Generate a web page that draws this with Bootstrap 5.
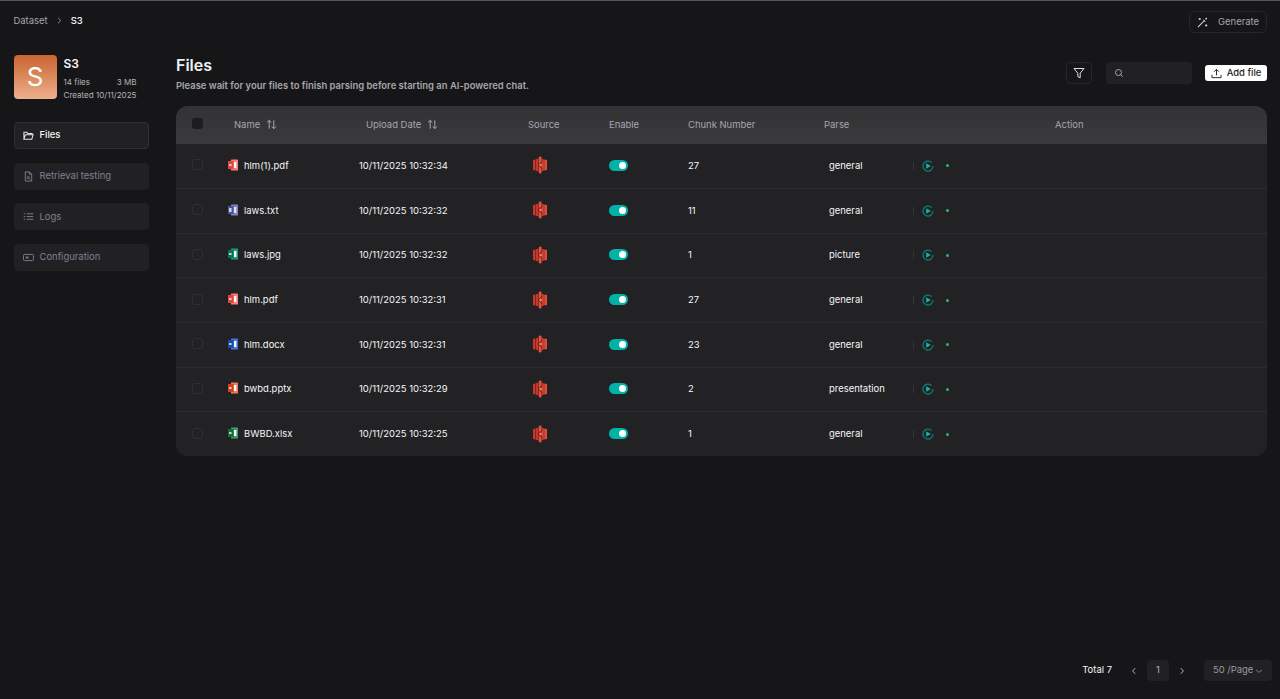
<!DOCTYPE html>
<html lang="en">
<head>
<meta charset="utf-8">
<title>Files</title>
<link href="https://cdn.jsdelivr.net/npm/bootstrap@5.3.0/dist/css/bootstrap.min.css" rel="stylesheet">
<style>
html,body{height:100%}
body{background:#161618;color:#f6f6f7;font-family:Inter,"Liberation Sans",sans-serif;font-size:9.45px;overflow:hidden}
.shell{height:699px;border-top:1px solid #55565a}
.crumbs{height:41px;padding:0 13px 0 13.5px}
.crumb-line{margin-top:-1px}
.crumb-a{color:#a6a7ad}
.crumb-b{color:#f6f6f7;font-weight:500}
.gen-btn{height:22px;width:78px;border:1px solid #26272a;border-radius:5px;color:#a6a7ad;font-size:9.45px;padding:0 7px 0 7px;background:transparent;margin-top:1px}
.body-row{height:656px}
.side{width:176px;padding:13px 27.5px 0 13.5px}
.ds-head{height:44px}
.ds-logo{width:43px;height:44px;border-radius:4px;background:linear-gradient(180deg,#c8642f,#eeb08d);color:#fff;font-size:26px;line-height:44px;text-align:center}
.ds-info{width:73px;margin-left:7px}
.ds-name{font-size:12px;font-weight:600;line-height:16px;margin-top:1px}
.ds-meta{color:#b3b4b9;font-size:8.05px;line-height:13px;margin-top:4px}
.side-nav{margin-top:23px;gap:13.6px}
.side-item{height:27px;border-radius:4px;background:#212123;color:#7e8194;padding-left:8px;gap:6px;border:1px solid #212123}
.side-item.on{color:#f6f6f7;border-color:#2f3033;font-weight:500}
.main{width:1091px}
.page-h{height:64px;padding-top:13px}
.page-title{font-size:16px;font-weight:600;line-height:20px;color:#f0f0f2}
.page-sub{font-weight:600;color:#a6a7ad;line-height:14px;margin-top:1px;padding-top:3px}
.tools{margin-top:7px;height:22px}
.filter-btn{width:26px;height:22px;border:1px solid #26272a;border-radius:4px;margin-right:14px}
.search-box{width:86px;height:22px;background:#212123;border-radius:4px;padding-left:8px;margin-right:13px}
.add-btn{width:62px;height:16px;background:#fff;color:#1c1c1e;border-radius:3px;font-size:9.45px;font-weight:500;gap:5px;padding:0;border:0}
.add-btn:hover{background:#fff;color:#1c1c1e}
.tbl-wrap{height:350px;border-radius:12px;overflow:hidden;background:#222224}
.ftable{table-layout:fixed;width:1091px;margin:0;border-collapse:collapse}
.ftable th{height:38px;background:linear-gradient(180deg,#333335,#3a3a3c);color:#a6a7ad;font-weight:400;font-size:9.45px;padding:0 0 0 8px;vertical-align:middle;border:0}
.ftable td{height:44.67px;background:#222224;color:#f6f6f7;font-size:9.45px;padding:0 0 .4px 8px;vertical-align:middle;border:0;border-bottom:1px solid #2b2b2d}
.ftable tr:last-child td{border-bottom:0}
.c1{width:44px}.c2{width:131px}.c3{width:169px}.c4{width:81px}.c5{width:79px}.c6{width:136px}.c7{width:231px}.c8{width:220px}
.ftable th.pl-n{padding-left:14px}
.ftable th.pl-d{padding-left:15px}
.ftable td.pl-s{padding-left:13px}
.ftable td.pl-c,.ftable th.pl-c{padding-left:16px}
.cb-h{width:11px;height:11px;border-radius:3px;background:#1d1d1f;display:block;margin-top:-3px}
.cb{width:11px;height:11px;border-radius:3px;border:1px solid #303032;display:block;margin-top:-2px}
.sort-lbl{gap:6px}
.sw{width:19px;height:11px;border-radius:6px;background:#00b3a8;display:block;position:relative;margin-top:-1px}
.sw::after{content:"";position:absolute;right:2px;top:2px;width:7px;height:7px;border-radius:50%;background:#fff}
.name-cell{gap:6px}
.file-ico{margin-top:-2px}
.src-ico{display:block;margin-top:-1px}
.parse-name{width:84px}
.sep{width:1px;height:8px;background:#36363a;margin-right:8px}
.dot{width:3px;height:3px;border-radius:50%;background:#2bb673;margin-left:12px}
.foot{margin-top:204px;margin-right:-5px}
.pg-total{margin-right:18px}
.pg-num{width:22px;height:21px;background:#212123;border-radius:4px;color:#b0b1b6;margin:0 9px}
.pg-size{width:68px;height:21px;background:#212123;border-radius:4px;color:#9a9ba1;margin-left:18px;padding-left:9px;gap:2px}
.defs-holder{width:0;height:0}
</style>
</head>
<body>
<div class="shell d-flex flex-column">
  <div class="crumbs d-flex align-items-center justify-content-between">
    <div class="crumb-line d-flex align-items-center">
      <span class="crumb-a">Dataset</span>
      <svg class="mx-2" width="7" height="7" viewBox="0 0 7 7" fill="none" stroke="#85868c" stroke-width="1"><path d="M2 .8 4.8 3.5 2 6.2"/></svg>
      <span class="crumb-b">S3</span>
    </div>
    <button class="gen-btn d-flex align-items-center justify-content-between">
      <svg width="11" height="11" viewBox="0 0 12 12" fill="none" stroke="#d5d6da" stroke-width="1.1"><path d="M1 11 8 4M7 3l2 2M3 1v2.4M1.8 2.2h2.4M10 .8v2M9 1.8h2M10 8v2.4M8.8 9.2h2.4"/></svg>
      <span>Generate</span>
    </button>
  </div>
  <div class="body-row d-flex">
    <div class="side">
      <div class="ds-head d-flex">
        <div class="ds-logo flex-shrink-0">S</div>
        <div class="ds-info">
          <div class="ds-name">S3</div>
          <div class="ds-meta">
            <div class="d-flex justify-content-between"><span>14 files</span><span>3 MB</span></div>
            <div>Created 10/11/2025</div>
          </div>
        </div>
      </div>
      <div class="side-nav d-flex flex-column">
        <div class="side-item on d-flex align-items-center">
          <svg width="11" height="11" viewBox="0 0 12 12" fill="none" stroke="#e8e8ea" stroke-width="1.1"><path d="M1 10V2.5h3.2l1 1.2H10v1.6M1 10h8.6L11 5.3H2.6L1 10Z"/></svg>
          <span>Files</span>
        </div>
        <div class="side-item d-flex align-items-center">
          <svg width="11" height="11" viewBox="0 0 12 12" fill="none" stroke="#7e8194" stroke-width="1"><path d="M2.5 1h4.5L9.5 3.5V11h-7ZM7 1v2.5h2.5"/><circle cx="5.8" cy="7.2" r="1.2"/><path d="m6.7 8.1 1 1"/></svg>
          <span>Retrieval testing</span>
        </div>
        <div class="side-item d-flex align-items-center">
          <svg width="11" height="11" viewBox="0 0 12 12" fill="none" stroke="#7e8194" stroke-width="1"><path d="M.8 3h1.6M4 3h7.2M.8 6h1.6M4 6h7.2M.8 9h1.6M4 9h7.2"/></svg>
          <span>Logs</span>
        </div>
        <div class="side-item d-flex align-items-center">
          <svg width="11" height="11" viewBox="0 0 12 12" fill="none" stroke="#7e8194" stroke-width="1"><rect x=".6" y="2.6" width="10.8" height="6.8" rx="1"/><rect x="3" y="5" width="3" height="2" fill="#7e8194" stroke="none"/></svg>
          <span>Configuration</span>
        </div>
      </div>
    </div>
    <div class="main">
      <div class="page-h d-flex justify-content-between">
        <div>
          <div class="page-title">Files</div>
          <div class="page-sub">Please wait for your files to finish parsing before starting an AI-powered chat.</div>
        </div>
        <div class="tools d-flex align-items-center align-self-start">
          <div class="filter-btn d-flex align-items-center justify-content-center">
            <svg width="12" height="12" viewBox="0 0 12 12" fill="none" stroke="#e0e0e3" stroke-width="1"><path d="M1 1.5h10L7.2 6.2V10.8L4.8 9.6V6.2Z"/></svg>
          </div>
          <div class="search-box d-flex align-items-center">
            <svg width="10" height="10" viewBox="0 0 10 10" fill="none" stroke="#a6a7ad" stroke-width="1"><circle cx="4.5" cy="4.5" r="3"/><path d="m6.7 6.7 2 2"/></svg>
          </div>
          <button class="add-btn btn d-flex align-items-center justify-content-center">
            <svg width="11" height="11" viewBox="0 0 12 12" fill="none" stroke="#1c1c1e" stroke-width="1"><path d="M1 7.5V10.5H11V7.5M6 8V1.5M3.5 4 6 1.5 8.5 4"/></svg>
            <span>Add file</span>
          </button>
        </div>
      </div>
      <div class="tbl-wrap">
        <table class="table ftable">
          <colgroup><col class="c1"><col class="c2"><col class="c3"><col class="c4"><col class="c5"><col class="c6"><col class="c7"><col class="c8"></colgroup>
          <thead>
            <tr>
              <th class="pl-c"><span class="cb-h"></span></th>
              <th class="pl-n"><span class="sort-lbl d-inline-flex align-items-center">Name <svg width="11" height="11" viewBox="0 0 12 12"><use href="#sort"/></svg></span></th>
              <th class="pl-d"><span class="sort-lbl d-inline-flex align-items-center">Upload Date <svg width="11" height="11" viewBox="0 0 12 12"><use href="#sort"/></svg></span></th>
              <th>Source</th><th>Enable</th><th>Chunk Number</th><th>Parse</th><th>Action</th>
            </tr>
          </thead>
          <tbody>
            <tr><td class="pl-c"><span class="cb"></span></td><td><div class="name-cell d-flex align-items-center"><svg class="file-ico" width="10" height="12" viewBox="0 0 10 12"><rect x="3" y=".5" width="7" height="11" rx=".6" fill="#f47f79"/><rect y="2" width="5.5" height="8" fill="#e8403b"/><rect x="1" y="5.3" width="2.6" height="1.4" fill="#fff"/><rect x="6" y="3" width="2.4" height="6" fill="#fff"/></svg><span>hlm(1).pdf</span></div></td><td>10/11/2025 10:32:34</td><td class="pl-s"><svg class="src-ico" width="14" height="18" viewBox="0 0 14 18"><use href="#s3"/></svg></td><td><span class="sw"></span></td><td>27</td><td class="pl-s"><div class="d-flex align-items-center"><span class="parse-name">general</span><span class="sep"></span><svg width="12" height="12" viewBox="0 0 12 12"><use href="#play"/></svg><span class="dot"></span></div></td><td></td></tr>
            <tr><td class="pl-c"><span class="cb"></span></td><td><div class="name-cell d-flex align-items-center"><svg class="file-ico" width="10" height="12" viewBox="0 0 10 12"><rect x="3" y=".5" width="7" height="11" rx=".6" fill="#7b83b8"/><rect y="2" width="5.5" height="8" fill="#4c5590"/><rect x="1" y="4" width="2.6" height="4" fill="#c9cde6"/><rect x="6" y="3" width="2.4" height="6" fill="#dfe1ef"/></svg><span>laws.txt</span></div></td><td>10/11/2025 10:32:32</td><td class="pl-s"><svg class="src-ico" width="14" height="18" viewBox="0 0 14 18"><use href="#s3"/></svg></td><td><span class="sw"></span></td><td>11</td><td class="pl-s"><div class="d-flex align-items-center"><span class="parse-name">general</span><span class="sep"></span><svg width="12" height="12" viewBox="0 0 12 12"><use href="#play"/></svg><span class="dot"></span></div></td><td></td></tr>
            <tr><td class="pl-c"><span class="cb"></span></td><td><div class="name-cell d-flex align-items-center"><svg class="file-ico" width="10" height="12" viewBox="0 0 10 12"><rect x="3" y=".5" width="7" height="11" rx=".6" fill="#1f9a7c"/><rect y="2" width="5.5" height="8" fill="#0e7058"/><rect x="1" y="5.3" width="2.6" height="1.4" fill="#fff"/><rect x="6" y="3" width="2.4" height="6" fill="#fff"/></svg><span>laws.jpg</span></div></td><td>10/11/2025 10:32:32</td><td class="pl-s"><svg class="src-ico" width="14" height="18" viewBox="0 0 14 18"><use href="#s3"/></svg></td><td><span class="sw"></span></td><td>1</td><td class="pl-s"><div class="d-flex align-items-center"><span class="parse-name">picture</span><span class="sep"></span><svg width="12" height="12" viewBox="0 0 12 12"><use href="#play"/></svg><span class="dot"></span></div></td><td></td></tr>
            <tr><td class="pl-c"><span class="cb"></span></td><td><div class="name-cell d-flex align-items-center"><svg class="file-ico" width="10" height="12" viewBox="0 0 10 12"><rect x="3" y=".5" width="7" height="11" rx=".6" fill="#f47f79"/><rect y="2" width="5.5" height="8" fill="#e8403b"/><rect x="1" y="5.3" width="2.6" height="1.4" fill="#fff"/><rect x="6" y="3" width="2.4" height="6" fill="#fff"/></svg><span>hlm.pdf</span></div></td><td>10/11/2025 10:32:31</td><td class="pl-s"><svg class="src-ico" width="14" height="18" viewBox="0 0 14 18"><use href="#s3"/></svg></td><td><span class="sw"></span></td><td>27</td><td class="pl-s"><div class="d-flex align-items-center"><span class="parse-name">general</span><span class="sep"></span><svg width="12" height="12" viewBox="0 0 12 12"><use href="#play"/></svg><span class="dot"></span></div></td><td></td></tr>
            <tr><td class="pl-c"><span class="cb"></span></td><td><div class="name-cell d-flex align-items-center"><svg class="file-ico" width="10" height="12" viewBox="0 0 10 12"><rect x="3" y=".5" width="7" height="11" rx=".6" fill="#3f78d8"/><rect y="2" width="5.5" height="8" fill="#1c4aa8"/><rect x="1" y="5.3" width="2.6" height="1.4" fill="#fff"/><rect x="6" y="3" width="2.4" height="6" fill="#fff"/></svg><span>hlm.docx</span></div></td><td>10/11/2025 10:32:31</td><td class="pl-s"><svg class="src-ico" width="14" height="18" viewBox="0 0 14 18"><use href="#s3"/></svg></td><td><span class="sw"></span></td><td>23</td><td class="pl-s"><div class="d-flex align-items-center"><span class="parse-name">general</span><span class="sep"></span><svg width="12" height="12" viewBox="0 0 12 12"><use href="#play"/></svg><span class="dot"></span></div></td><td></td></tr>
            <tr><td class="pl-c"><span class="cb"></span></td><td><div class="name-cell d-flex align-items-center"><svg class="file-ico" width="10" height="12" viewBox="0 0 10 12"><rect x="3" y=".5" width="7" height="11" rx=".6" fill="#ef7a55"/><rect y="2" width="5.5" height="8" fill="#d2401f"/><rect x="1" y="5.3" width="2.6" height="1.4" fill="#fff"/><rect x="6" y="3" width="2.4" height="6" fill="#fff"/></svg><span>bwbd.pptx</span></div></td><td>10/11/2025 10:32:29</td><td class="pl-s"><svg class="src-ico" width="14" height="18" viewBox="0 0 14 18"><use href="#s3"/></svg></td><td><span class="sw"></span></td><td>2</td><td class="pl-s"><div class="d-flex align-items-center"><span class="parse-name">presentation</span><span class="sep"></span><svg width="12" height="12" viewBox="0 0 12 12"><use href="#play"/></svg><span class="dot"></span></div></td><td></td></tr>
            <tr><td class="pl-c"><span class="cb"></span></td><td><div class="name-cell d-flex align-items-center"><svg class="file-ico" width="10" height="12" viewBox="0 0 10 12"><rect x="3" y=".5" width="7" height="11" rx=".6" fill="#3aa067"/><rect y="2" width="5.5" height="8" fill="#176b3c"/><rect x="1" y="5.3" width="2.6" height="1.4" fill="#fff"/><rect x="6" y="3" width="2.4" height="6" fill="#fff"/></svg><span>BWBD.xlsx</span></div></td><td>10/11/2025 10:32:25</td><td class="pl-s"><svg class="src-ico" width="14" height="18" viewBox="0 0 14 18"><use href="#s3"/></svg></td><td><span class="sw"></span></td><td>1</td><td class="pl-s"><div class="d-flex align-items-center"><span class="parse-name">general</span><span class="sep"></span><svg width="12" height="12" viewBox="0 0 12 12"><use href="#play"/></svg><span class="dot"></span></div></td><td></td></tr>
          </tbody>
        </table>
      </div>
      <div class="foot d-flex align-items-center justify-content-end">
        <span class="pg-total">Total 7</span>
        <svg width="8" height="8" viewBox="0 0 8 8" fill="none" stroke="#b0b1b6" stroke-width="1"><path d="M5.2 1.2 2.6 4l2.6 2.8"/></svg>
        <span class="pg-num d-flex align-items-center justify-content-center">1</span>
        <svg width="8" height="8" viewBox="0 0 8 8" fill="none" stroke="#b0b1b6" stroke-width="1"><path d="M2.8 1.2 5.4 4 2.8 6.8"/></svg>
        <span class="pg-size d-flex align-items-center"><span>50 /Page</span><svg width="8" height="8" viewBox="0 0 8 8" fill="none" stroke="#7d7e84" stroke-width="1"><path d="M1 2.8 4 5.4 7 2.8"/></svg></span>
      </div>
    </div>
  </div>
</div>
<svg class="defs-holder d-block">
  <defs>
    <g id="sort" fill="none" stroke="#b4b5ba" stroke-width="1"><path d="M3.5 10.5V1.5M1.2 3.8l2.3-2.3 2.3 2.3M8.5 1.5v9M6.2 8.2l2.3 2.3 2.3-2.3"/></g>
    <g id="s3">
      <path d="M0 4 2.4 3.4V14.6L0 14Z" fill="#c9382a"/>
      <path d="M14 4 11.2 3.4V14.6L14 14Z" fill="#e04c39"/>
      <path d="M2.8 3.2 5.4 2.6V15.4L2.8 14.8Z" fill="#c9352a"/>
      <path d="M5.8 1.2 7.2 .2 8.6 1.2V16.8L7.2 17.8 5.8 16.8Z" fill="#e8503c"/>
      <path d="M8.9 3 10.9 3.4V14.6L8.9 15Z" fill="#d8412f"/>
      <path d="M9.4 4.8 5.4 9l4 4.2" fill="none" stroke="#6e1b13" stroke-width="1"/>
      <path d="M6.4 9h2.6" stroke="#f2a698" stroke-width="1.1"/>
    </g>
    <g id="play" fill="none">
      <path d="M9.6 2.6A5 5 0 1 0 11 6" stroke="#0d7f79" stroke-width="1.2"/>
      <path d="M4.2 3.2 8.8 6 4.2 8.8Z" fill="#0fb5aa"/>
    </g>
  </defs>
</svg>
</body>
</html>
